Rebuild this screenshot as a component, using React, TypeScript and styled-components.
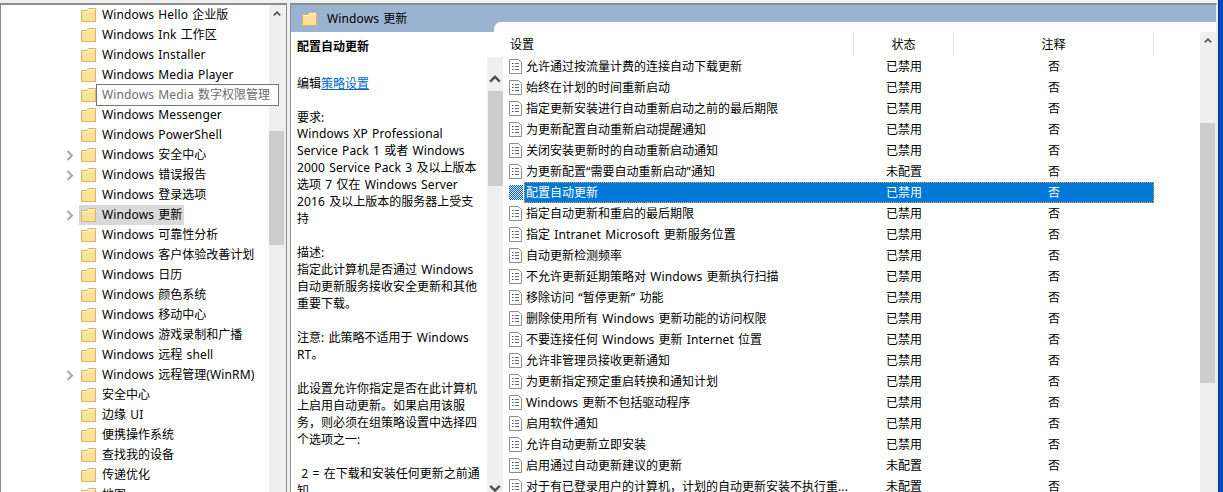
import styled, { createGlobalStyle } from 'styled-components';

const GlobalStyle = createGlobalStyle`
  html, body {
    margin: 0;
    padding: 0;
    background: #f0f0f0;
    overflow: hidden;
  }
  #root {
    height: 492px;
  }
`;

const Window = styled.div`
  width: 1223px;
  height: 492px;
  display: flex;
  overflow: hidden;
  font-family: "Noto Sans CJK SC", sans-serif;
  font-size: 12px;
  color: #000;
`;

const Latin = styled.span`
  font-family: "Noto Sans", sans-serif;
  letter-spacing: 0.12px;
  word-spacing: 1px;
`;

const TreePane = styled.div`
  width: 287px;
  flex: none;
  display: flex;
  position: relative;
  margin-top: 3px;
  background: #fff;
  border: 1px solid #8c8c8c;
  border-width: 2px 1px 0 1px;
  box-sizing: border-box;
`;

const TreeList = styled.div`
  flex: 1;
  overflow: hidden;
`;

const TreeRow = styled.div`
  height: 20px;
  display: flex;
  align-items: center;
  padding-left: 65px;
`;

const Chevron = styled.svg<{ $hidden: boolean }>`
  width: 8px;
  height: 11px;
  flex: none;
  margin-right: 5px;
  visibility: ${({ $hidden }) => ($hidden ? 'hidden' : 'visible')};
`;

const TreeLabel = styled.div<{ $selected?: boolean }>`
  height: 20px;
  display: flex;
  align-items: center;
  gap: 6px;
  padding: 0 2px;
  background: ${({ $selected }) => ($selected ? '#d9d9d9' : 'transparent')};
  white-space: nowrap;
`;

const LabelText = styled.span`
  line-height: 18px;
  padding-bottom: 2px;
`;

const Tooltip = styled.div`
  position: absolute;
  left: 95px;
  top: 79px;
  width: 183px;
  height: 22px;
  box-sizing: border-box;
  background: #fff;
  border: 1px solid #767676;
  color: #6d6d6d;
  padding-left: 5px;
  line-height: 18px;
  white-space: nowrap;
`;

const Scrollbar = styled.div<{ $width: number }>`
  width: ${({ $width }) => $width}px;
  flex: none;
  background: #efefef;
  display: flex;
  flex-direction: column;
`;

const ArrowBox = styled.div<{ $height: number; $pad: number; $inset?: number }>`
  height: ${({ $height }) => $height}px;
  flex: none;
  box-sizing: border-box;
  padding-top: ${({ $pad }) => $pad}px;
  padding-right: ${({ $inset }) => $inset ?? 0}px;
  display: flex;
  align-items: flex-start;
  justify-content: center;
`;

const Thumb = styled.div<{ $height: number; $end?: boolean }>`
  height: ${({ $height }) => $height}px;
  width: 15px;
  flex: none;
  align-self: ${({ $end }) => ($end ? 'flex-end' : 'flex-start')};
  background: #cdcdcd;
`;

const Spacer = styled.div`
  flex: 1;
`;

const Gap = styled.div`
  width: 3px;
  flex: none;
`;

const MainPane = styled.div`
  width: 927px;
  flex: none;
  display: flex;
  flex-direction: column;
  position: relative;
  margin-top: 3px;
  background: #fff;
  border: 1px solid #8c8c8c;
  border-right-color: #e6e6e6;
  border-width: 2px 1px 0 1px;
  box-sizing: border-box;
`;

const Desktop = styled.div`
  flex: 1;
  margin-left: 1px;
  background: #0b47bd;
  border-left: 1px solid #0a2f7c;
`;

const Banner = styled.div`
  height: 27px;
  flex: none;
  background: #9ab3d0;
  display: flex;
  align-items: center;
  padding-left: 11px;
  gap: 10px;
  line-height: 26px;
`;

const BannerTab = styled.div`
  position: absolute;
  left: 203px;
  right: 0;
  top: 17px;
  height: 10px;
  background: #fff;
  border-top-left-radius: 7px;
`;

const MainBody = styled.div`
  flex: 1;
  min-height: 0;
  display: flex;
`;

const DescriptionText = styled.div`
  width: 196px;
  flex: none;
  padding: 5px 0 0 6px;
  box-sizing: border-box;
  overflow: hidden;
  white-space: pre;
  line-height: 17px;
`;

const Title = styled.div`
  font-weight: 700;
  height: 20px;
`;

const Line = styled.div<{ $short?: boolean }>`
  height: ${({ $short }) => ($short ? 16 : 17)}px;
`;

const PolicyLink = styled.span`
  color: #0066cc;
  text-decoration: underline;
`;

const DescriptionScroll = styled.div`
  flex: none;
  display: flex;
  padding-top: 25px;
`;

const ListColumn = styled.div`
  flex: 1;
  min-width: 0;
  overflow: hidden;
`;

const HeaderRow = styled.div`
  height: 24px;
  display: flex;
`;

const HeaderCell = styled.div<{ $width: number; $center?: boolean }>`
  width: ${({ $width }) => $width}px;
  flex: none;
  box-sizing: border-box;
  border-right: 1px solid #e3e3e3;
  line-height: 23px;
  padding-left: ${({ $center }) => ($center ? 0 : 7)}px;
  text-align: ${({ $center }) => ($center ? 'center' : 'left')};
`;

const Row = styled.div`
  height: 21px;
  display: flex;
  align-items: center;
  padding-left: 6px;
`;

const RowBody = styled.div<{ $selected?: boolean }>`
  display: flex;
  height: 21px;
  line-height: 20px;
  margin-left: 1px;
  background: ${({ $selected }) => ($selected ? '#0078d7' : 'transparent')};
  color: ${({ $selected }) => ($selected ? '#fff' : '#000')};
  outline: ${({ $selected }) => ($selected ? '1px dotted #e8a33d' : 'none')};
  outline-offset: -1px;
`;

const NameCell = styled.div`
  width: 330px;
  flex: none;
  padding-left: 2px;
  box-sizing: border-box;
  white-space: nowrap;
  overflow: hidden;
`;

const Cell = styled.div<{ $width: number }>`
  width: ${({ $width }) => $width}px;
  flex: none;
  text-align: center;
`;

const treeItems: [string, boolean?, boolean?][] = [
  ['Windows Hello 企业版'],
  ['Windows Ink 工作区'],
  ['Windows Installer'],
  ['Windows Media Player'],
  [''],
  ['Windows Messenger'],
  ['Windows PowerShell'],
  ['Windows 安全中心', true],
  ['Windows 错误报告', true],
  ['Windows 登录选项'],
  ['Windows 更新', true, true],
  ['Windows 可靠性分析'],
  ['Windows 客户体验改善计划'],
  ['Windows 日历'],
  ['Windows 颜色系统'],
  ['Windows 移动中心'],
  ['Windows 游戏录制和广播'],
  ['Windows 远程 shell'],
  ['Windows 远程管理(WinRM)', true],
  ['安全中心'],
  ['边缘 UI'],
  ['便携操作系统'],
  ['查找我的设备'],
  ['传递优化'],
  ['地图'],
];

const descriptionLines = [
  '',
  'LINK',
  '',
  '要求:',
  'Windows XP Professional',
  'Service Pack 1 或者 Windows',
  '2000 Service Pack 3 及以上版本',
  '选项 7 仅在 Windows Server',
  '2016 及以上版本的服务器上受支',
  '持',
  '',
  '描述:',
  '指定此计算机是否通过 Windows',
  '自动更新服务接收安全更新和其他',
  '重要下载。',
  '',
  '注意: 此策略不适用于 Windows',
  'RT。',
  '',
  '此设置允许你指定是否在此计算机',
  '上启用自动更新。如果启用该服',
  '务\uFF0C则必须在组策略设置中选择四',
  '个选项之一:',
  '',
  ' 2 = 在下载和安装任何更新之前通',
  '知',
];

const policies: [string, string][] = [
  ['允许通过按流量计费的连接自动下载更新', '已禁用'],
  ['始终在计划的时间重新启动', '已禁用'],
  ['指定更新安装进行自动重新启动之前的最后期限', '已禁用'],
  ['为更新配置自动重新启动提醒通知', '已禁用'],
  ['关闭安装更新时的自动重新启动通知', '已禁用'],
  ['为更新配置“需要自动重新启动”通知', '未配置'],
  ['配置自动更新', '已禁用'],
  ['指定自动更新和重启的最后期限', '已禁用'],
  ['指定 Intranet Microsoft 更新服务位置', '已禁用'],
  ['自动更新检测频率', '已禁用'],
  ['不允许更新延期策略对 Windows 更新执行扫描', '已禁用'],
  ['移除访问 “暂停更新” 功能', '已禁用'],
  ['删除使用所有 Windows 更新功能的访问权限', '已禁用'],
  ['不要连接任何 Windows 更新 Internet 位置', '已禁用'],
  ['允许非管理员接收更新通知', '已禁用'],
  ['为更新指定预定重启转换和通知计划', '已禁用'],
  ['Windows 更新不包括驱动程序', '已禁用'],
  ['启用软件通知', '已禁用'],
  ['允许自动更新立即安装', '已禁用'],
  ['启用通过自动更新建议的更新', '未配置'],
  ['对于有已登录用户的计算机\uFF0C计划的自动更新安装不执行重...', '未配置'],
];

const LATIN_RUN = /([A-Za-z0-9()=.:“” ]+)/;

function Mixed({ text }: { text: string }) {
  const parts = text.split(LATIN_RUN).filter(Boolean);
  return (
    <>
      {parts.map((part, i) =>
        /^[A-Za-z0-9()=.:“” ]+$/.test(part) ? <Latin key={i}>{part}</Latin> : <span key={i}>{part}</span>
      )}
    </>
  );
}

function Folder() {
  return (
    <svg width="15" height="14" viewBox="0 0 15 14" style={{ flex: 'none' }}>
      <path d="M0.5 2.5 H6 L7.5 0.5 H14.5 V13.5 H0.5 Z" fill="#fde7a3" stroke="#d8b465" />
      <path d="M1 3.5 H6.5 L8 1.5 H14" fill="none" stroke="#fff4cf" />
      <rect x="1" y="4" width="13" height="9" fill="#fbe095" />
    </svg>
  );
}

function Arrow({ down, size }: { down?: boolean; size: number }) {
  return (
    <svg width={size} height={size * 0.7} viewBox="0 0 10 7">
      <path d={down ? 'M1 1.5 L5 5.5 L9 1.5' : 'M1 5.5 L5 1.5 L9 5.5'} fill="none" stroke="#505050" strokeWidth="2" />
    </svg>
  );
}

function DocIcon({ selected }: { selected?: boolean }) {
  if (selected) {
    return (
      <svg width="14" height="15" viewBox="0 0 14 15" style={{ flex: 'none' }}>
        <defs>
          <pattern id="dither" width="2" height="2" patternUnits="userSpaceOnUse">
            <rect width="2" height="2" fill="#0b5fb0" />
            <rect width="1" height="1" fill="#d5e8f8" />
            <rect x="1" y="1" width="1" height="1" fill="#d5e8f8" />
          </pattern>
        </defs>
        <rect width="14" height="15" fill="url(#dither)" />
      </svg>
    );
  }
  return (
    <svg width="14" height="15" viewBox="0 0 14 15" style={{ flex: 'none' }}>
      <path d="M0.5 0.5 H9.5 L12.5 3.5 V14.5 H0.5 Z" fill="#fff" stroke="#8f8f8f" />
      <path d="M3 4.5 H4.5 M3 7.5 H4.5 M3 10.5 H4.5" stroke="#3f4f6f" />
      <path d="M6 4.5 H10 M6 7.5 H10 M6 10.5 H10" stroke="#6a6a6a" />
    </svg>
  );
}

export default function App() {
  return (
    <Window>
      <GlobalStyle />
      <TreePane>
        <TreeList>
          {treeItems.map(([label, expandable, selected], i) => (
            <TreeRow key={i}>
              <Chevron viewBox="0 0 8 11" $hidden={!expandable}>
                <path d="M1.5 1 L6 5.5 L1.5 10" fill="none" stroke="#a6a6a6" strokeWidth="2" />
              </Chevron>
              <TreeLabel $selected={selected}>
                <Folder />
                <LabelText><Mixed text={label} /></LabelText>
              </TreeLabel>
            </TreeRow>
          ))}
        </TreeList>
        <Scrollbar $width={17}>
          <ArrowBox $height={126} $pad={6} $inset={2}><Arrow size={8} /></ArrowBox>
          <Thumb $height={114} />
          <Spacer />
        </Scrollbar>
        <Tooltip><Mixed text="Windows Media 数字权限管理" /></Tooltip>
      </TreePane>
      <Gap />
      <MainPane>
        <Banner>
          <Folder />
          <span><Mixed text="Windows 更新" /></span>
        </Banner>
        <BannerTab />
        <MainBody>
          <DescriptionText>
            <Title>配置自动更新</Title>
            {descriptionLines.map((line, i) =>
              line === 'LINK' ? (
                <Line key={i}>编辑<PolicyLink>策略设置</PolicyLink></Line>
              ) : (
                <Line key={i} $short={line === '要求:'}><Mixed text={line} /></Line>
              )
            )}
          </DescriptionText>
          <DescriptionScroll>
            <Scrollbar $width={16}>
              <ArrowBox $height={34} $pad={18}><Arrow size={12} /></ArrowBox>
              <Thumb $height={95} $end />
              <Spacer />
              <ArrowBox $height={10} $pad={2}><Arrow down size={12} /></ArrowBox>
            </Scrollbar>
          </DescriptionScroll>
          <ListColumn>
            <HeaderRow>
              <HeaderCell $width={351}>设置</HeaderCell>
              <HeaderCell $width={100} $center>状态</HeaderCell>
              <HeaderCell $width={200} $center>注释</HeaderCell>
            </HeaderRow>
            {policies.map(([name, status], i) => (
              <Row key={name}>
                <DocIcon selected={i === 6} />
                <RowBody $selected={i === 6}>
                  <NameCell><Mixed text={name} /></NameCell>
                  <Cell $width={100}>{status}</Cell>
                  <Cell $width={200}>否</Cell>
                </RowBody>
              </Row>
            ))}
          </ListColumn>
          <Scrollbar $width={16}>
            <ArrowBox $height={91} $pad={6} $inset={1}><Arrow size={8} /></ArrowBox>
            <Thumb $height={260} />
            <Spacer />
          </Scrollbar>
        </MainBody>
      </MainPane>
      <Desktop />
    </Window>
  );
}
